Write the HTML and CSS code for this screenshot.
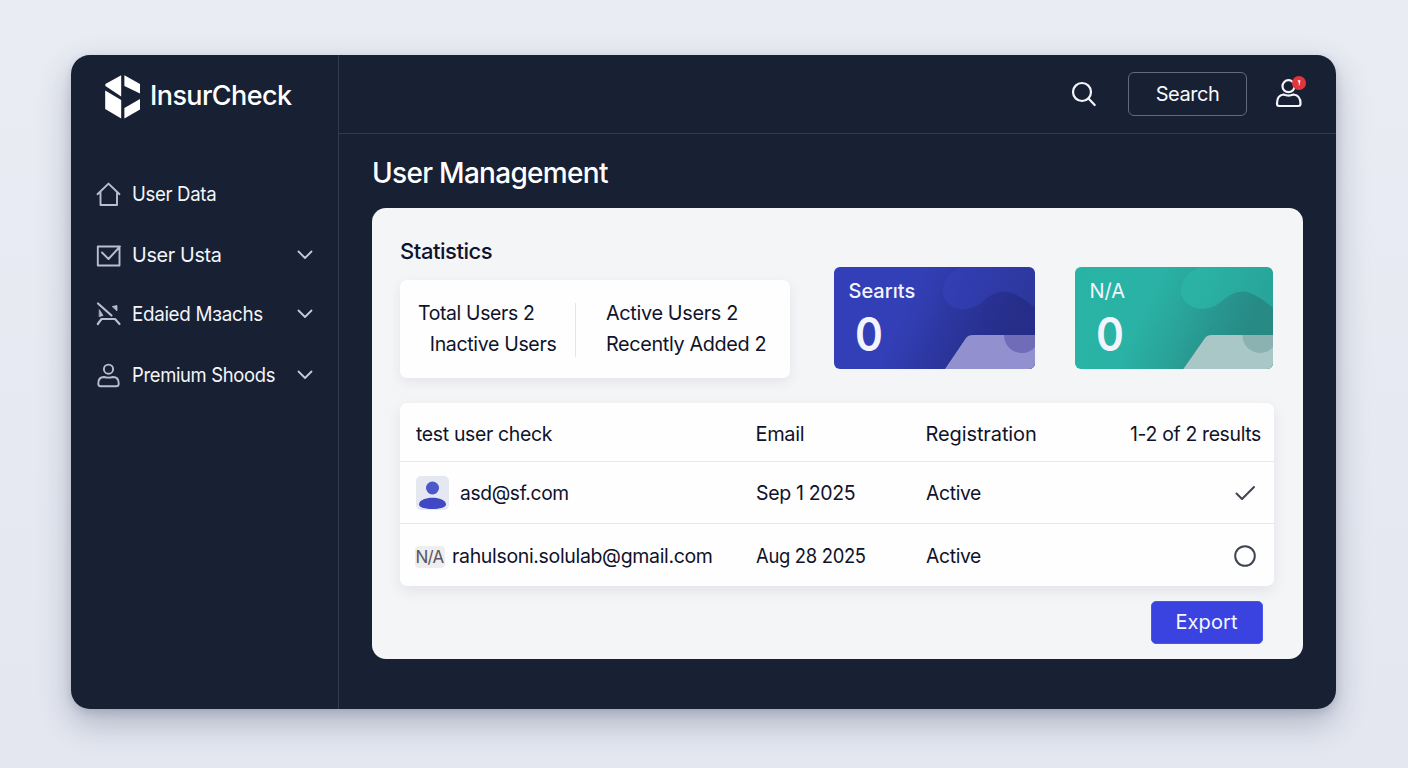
FILE: index.html
```html
<!DOCTYPE html>
<html lang="en">
<head>
<meta charset="utf-8">
<title>InsurCheck</title>
<link rel="stylesheet" href="styles.css">
</head>
<body>
<div class="window">
  <aside class="sidebar">
    <div class="brand">
      <svg class="brand-mark" width="36" height="44" viewBox="0 0 36 44" fill="#fff"><path d="M16.2.2V21.4L.4 11V9z"/><path d="M.2 15.500 16.2 25V43.6L.2 34z"/><path d="M19.4.2 35 9V18.500L19.4 11z"/><path d="M35 24V34.6L19.4 43.6V33z"/></svg>
      <span class="brand-name">InsurCheck</span>
    </div>
    <nav class="menu">
      <a class="item"><svg class="icon" width="26" height="26" viewBox="0 0 26 26"><path d="M1.500 13.200 12.500 2.600 23.500 13.200M4.500 11.500V24H21V11.500"/></svg><span class="label l-data">User Data</span></a>
      <a class="item usta"><svg class="icon" width="26" height="26" viewBox="0 0 26 26"><path d="M23.500 6.500V23.500H1.800V4.500H24L12.500 17 6 10.500"/></svg><span class="label l-usta">User Usta</span><svg class="chev" width="16" height="10" viewBox="0 0 16 10"><path d="M1.500 1.500 8 8 14.500 1.500"/></svg></a>
      <a class="item"><svg class="icon" width="26" height="26" viewBox="0 0 26 26"><path d="M2 2.500 15.500 14.500M1.800 23 5.500 18H19L23.500 23" stroke-width="2.200"/><path d="M3.500 9 7 14.500 3.500 15.500zM16.500 5.500 21 4.500V9.500z" fill="#b3bed3" stroke-width=".8"/></svg><span class="label l-mach">Edaied Mɜachs</span><svg class="chev" width="16" height="10" viewBox="0 0 16 10"><path d="M1.500 1.500 8 8 14.500 1.500"/></svg></a>
      <a class="item"><svg class="icon" width="26" height="26" viewBox="0 0 26 26"><circle cx="12.500" cy="7.200" r="4.600"/><path d="M2.300 21.500C2.300 17 4.500 15 8 15 11 15.800 14 15.800 17 15 20.500 15 22.700 17 22.700 21.500 22.700 23.500 22 24.300 20.500 24.300H4.500C3 24.300 2.300 23.500 2.300 21.500z"/></svg><span class="label l-prem">Premium Shoods</span><svg class="chev" width="16" height="10" viewBox="0 0 16 10"><path d="M1.500 1.500 8 8 14.500 1.500"/></svg></a>
    </nav>
  </aside>
  <div class="main">
    <header class="topbar">
      <svg class="search-icon" width="26" height="26" viewBox="0 0 26 26"><circle cx="11" cy="11" r="9"/><path d="M17.500 17.500 23.700 24"/></svg>
      <button class="search-btn">Search</button>
      <div class="account">
        <svg class="account-icon" width="28" height="30" viewBox="0 0 28 30"><circle cx="13.500" cy="7.200" r="6"/><path d="M2 24.500C2 19 4 16 8.500 15.500 12 17 15 17 18.500 15.500 23 16 25.500 19 25.500 24.500 25.500 26.300 25 27 23.500 27H4C2.500 27 2 26.300 2 24.500z"/></svg>
        <span class="badge"><svg width="14" height="14" viewBox="0 0 14 14"><path d="M5.600 4.200H8.400L7.600 8.800 6.800 9.800V6.800z" fill="#fff"/></svg></span>
      </div>
    </header>
    <main class="content">
      <h1 class="title">User Management</h1>
      <section class="panel">
        <div class="overview">
          <div class="stats">
            <h2 class="stats-title">Statistics</h2>
            <div class="stats-card">
              <div class="stats-left"><div class="s-total">Total Users 2</div><div class="s-inactive">Inactive Users</div></div>
              <div class="stats-right"><div class="s-active">Active Users 2</div><div class="s-recent">Recently Added 2</div></div>
            </div>
          </div>
          <div class="tile blue">
            <svg class="tile-art" viewBox="0 0 201 102" preserveAspectRatio="none"><path d="M40 102V0H126C108 8 106 26 112 34 121 46 137 44 148 35 157 27 167 22 178 26 188 30 195 36 201 41V102z" fill="url(#shadeBlue)"/><path d="M111 102 132 71Q134 68 139 68H201V102z" fill="#9390cf"/><path d="M170 68H201V80C191 92 170 85 170 68z" fill="#706cb8"/><defs><linearGradient id="shadeBlue" gradientUnits="userSpaceOnUse" x1="75" y1="30" x2="170" y2="75"><stop offset="0" stop-color="#242c86" stop-opacity="0"/><stop offset="1" stop-color="#242c86" stop-opacity=".85"/></linearGradient></defs></svg>
            <span class="tile-label t-sear">Searıts</span><span class="tile-num">0</span>
          </div>
          <div class="tile teal">
            <svg class="tile-art" viewBox="0 0 201 102" preserveAspectRatio="none"><path d="M40 102V0H126C108 8 104 24 110 32 119 45 137 44 148 35 157 27 167 22 178 26 188 30 195 36 201 41V102z" fill="url(#shadeTeal)"/><path d="M110 102 132 71Q134 68 139 68H201V102z" fill="#a9c7c6"/><path d="M170 68H201V80C191 92 170 85 170 68z" fill="#8bb1b0"/><defs><linearGradient id="shadeTeal" gradientUnits="userSpaceOnUse" x1="75" y1="30" x2="170" y2="75"><stop offset="0" stop-color="#278581" stop-opacity="0"/><stop offset="1" stop-color="#278581" stop-opacity=".85"/></linearGradient></defs></svg>
            <span class="tile-label t-na">N/A</span><span class="tile-num">0</span>
          </div>
        </div>
        <div class="table">
          <div class="row head"><span class="c-check">test user check</span><span class="c-email">Email</span><span class="c-reg">Registration</span><span class="end c-res">1-2 of 2 results</span></div>
          <div class="row"><span class="user"><svg class="avatar" width="33" height="34" viewBox="0 0 33 34"><rect width="33" height="34" rx="5" fill="#e5e7f1"/><circle cx="16.500" cy="12" r="6.500" fill="#4c58ca"/><path d="M3 28.500C3 19.500 30 19.500 30 28.500 30 34.500 3 34.500 3 28.500z" fill="#4049c3"/></svg><span class="u-asd">asd@sf.com</span></span><span class="c-sep">Sep 1 2025</span><span class="c-act">Active</span><span class="end mark"><svg width="24" height="24" viewBox="0 0 24 24"><path d="M3.500 12.500 9 18 21 6"/></svg></span></div>
          <div class="row last"><span class="user tight"><span class="na">N/A</span><span class="u-rah">rahulsoni.solulab@gmail.com</span></span><span class="c-aug">Aug 28 2025</span><span class="c-act">Active</span><span class="end mark"><svg width="24" height="24" viewBox="0 0 24 24"><circle cx="12" cy="12" r="9.800"/></svg></span></div>
        </div>
        <button class="export">Export</button>
      </section>
    </main>
  </div>
</div>
</body>
</html>
```
FILE: styles.css
```css
* { box-sizing: border-box; }
body { margin: 0; height: 768px; overflow: hidden; padding: 55px 72px 59px 71px; background: linear-gradient(180deg, #e9ecf3, #e4e7f0); font-family: Inter, "Liberation Sans", sans-serif; font-size: 20px; line-height: 24px; letter-spacing: -.35px; color: #10132a; white-space: nowrap; }
h1, h2 { margin: 0; font-weight: 500; }
button { font: inherit; padding: 0; }
svg { display: block; flex: none; }
.window { display: flex; height: 654px; border-radius: 19px; background: #182033; box-shadow: 0 14px 32px rgba(50, 57, 90, .3), 0 3px 8px rgba(50, 57, 90, .15); }
.sidebar { width: 268px; border-right: 1px solid #333a4d; flex: none; }
.brand { display: flex; align-items: center; gap: 9px; padding: 19.500px 0 0 34px; color: #fff; }
.brand-name { font-size: 27px; line-height: 32px; font-weight: 500; letter-spacing: -.6px; margin-top: -1px; }
.menu { display: flex; flex-direction: column; padding: 45px 25px 0 25px; }
.item { display: flex; align-items: center; height: 60.300px; color: #f3f5fa; }
.usta { padding-top: 2px; }
.icon { fill: none; stroke: #b9bfce; stroke-width: 1.900; stroke-linejoin: round; stroke-linecap: round; }
.label { margin-left: 9.800px; margin-right: -20px; }
.chev { margin-left: auto; fill: none; stroke: #c6cbd8; stroke-width: 1.800; stroke-linecap: round; stroke-linejoin: round; }
.main { flex: 1; min-width: 0; }
.topbar { height: 79px; border-bottom: 1px solid #333a4d; display: flex; align-items: center; justify-content: flex-end; padding: 0 33px 1px 0; }
.search-icon, .account-icon { fill: none; stroke: #f5f6fa; stroke-width: 2.200; stroke-linecap: round; }
.search-btn { width: 119px; height: 44px; margin: 0 28px 0 31px; border: 1px solid #626a7b; border-radius: 6px; background: transparent; color: #f8f9fc; letter-spacing: -.45px; }
.account { position: relative; width: 28px; }
.badge { position: absolute; top: -3px; right: -3px; width: 14px; height: 14px; border-radius: 50%; background: #e2353d; }
.content { padding: 22px 33px 0 33px; }
.title { font-size: 28px; line-height: 34px; color: #fff; letter-spacing: -.7px; }
.panel { height: 451px; margin-top: 18px; padding: 31px 29px 0 28px; border-radius: 14px; background: #f4f5f7; }
.overview { display: flex; height: 164px; }
.stats { width: 390px; }
.stats-title { font-size: 22px; line-height: 24px; letter-spacing: -.45px; }
.stats-card { display: flex; height: 98px; margin-top: 16.500px; padding: 18.500px 0 0 18px; border-radius: 7px; background: #fefefe; line-height: 31px; box-shadow: 0 4px 12px rgba(40, 50, 80, .08); }
.stats-left { width: 158px; height: 62px; background: linear-gradient(#e3e5e9, #e3e5e9) right 5px / 1px 54px no-repeat; }
.s-inactive { padding-left: 12px; }
.stats-right { padding-left: 30px; }
.tile { position: relative; overflow: hidden; display: flex; flex-direction: column; height: 102px; margin-top: 28px; border-radius: 6px; color: #f2f5ff; padding: 12px 0 0 14.500px; letter-spacing: 0; }
.blue { width: 201px; margin-left: 44px; background: linear-gradient(110deg, #323fb9, #333fb6 45%, #2b3596); }
.teal { width: 198px; margin-left: 40px; background: linear-gradient(110deg, #28b4a5, #2bb2a5 55%, #279f96); }
.tile-art { position: absolute; inset: 0; width: 100%; height: 102px; }
.tile-label, .tile-num { position: relative; }
.t-sear { font-weight: 500; }
.tile-num { font-size: 46px; line-height: 50px; font-weight: 600; margin-left: 6px; margin-top: 6px; transform: scaleX(.92); transform-origin: 0 0; }
.table { height: 182.500px; border-radius: 7px; background: #fefefe; box-shadow: 0 5px 14px rgba(40, 50, 80, .09); }
.row { display: grid; grid-template-columns: 340px 170px 1fr 150px; align-items: center; height: 62px; padding: 0 13px 0 15.500px; border-bottom: 1px solid #e6e8ec; }
.head { height: 59px; padding-top: 3px; }
.last { border-bottom: 0; height: 63px; }
.end { justify-self: end; }
.user { display: flex; align-items: center; gap: 11px; }
.tight { gap: 7px; }
.na { width: 30px; height: 22px; margin-left: -1px; margin-top: 3px; border-radius: 4px; background: #eeeeef; font-size: 17px; line-height: 22px; color: #5a5560; text-align: center; letter-spacing: -.8px; }
.mark { margin-right: 4px; }
.mark svg { fill: none; stroke: #3e4450; stroke-width: 2; stroke-linecap: round; stroke-linejoin: round; }
.export { display: block; width: 112px; height: 43px; margin: 15.500px 11.500px 0 auto; padding-bottom: 2px; border: 1px solid #4c55ed; border-radius: 5px; background: #3a43df; color: #f4f5ff; letter-spacing: .1px; }

/* condensed text widths */
.label, .s-total, .s-inactive, .s-active, .s-recent, .c-check, .c-sep, .c-aug, .c-act, .u-asd, .u-rah { transform-origin: 0 50%; }
.l-data { transform: scaleX(.93); }
.l-usta { transform: scaleX(.99); }
.l-mach { transform: scaleX(.94); }
.l-prem { transform: scaleX(.92); }
.s-total { transform: scaleX(.97); }
.s-inactive { transform: scaleX(.977); }
.s-active { transform: scaleX(.993); }
.s-recent { transform: scaleX(.99); }
.c-check { transform: scaleX(.972); }
.c-reg { letter-spacing: -.1px; }
.c-res { transform: scaleX(.97); transform-origin: 100% 50%; }
.c-sep { transform: scaleX(.975); }
.c-aug { transform: scaleX(.922); }
.c-act { transform: scaleX(.965); }
.u-asd { transform: scaleX(.96); }
.u-rah { transform: scaleX(.976); }
```
